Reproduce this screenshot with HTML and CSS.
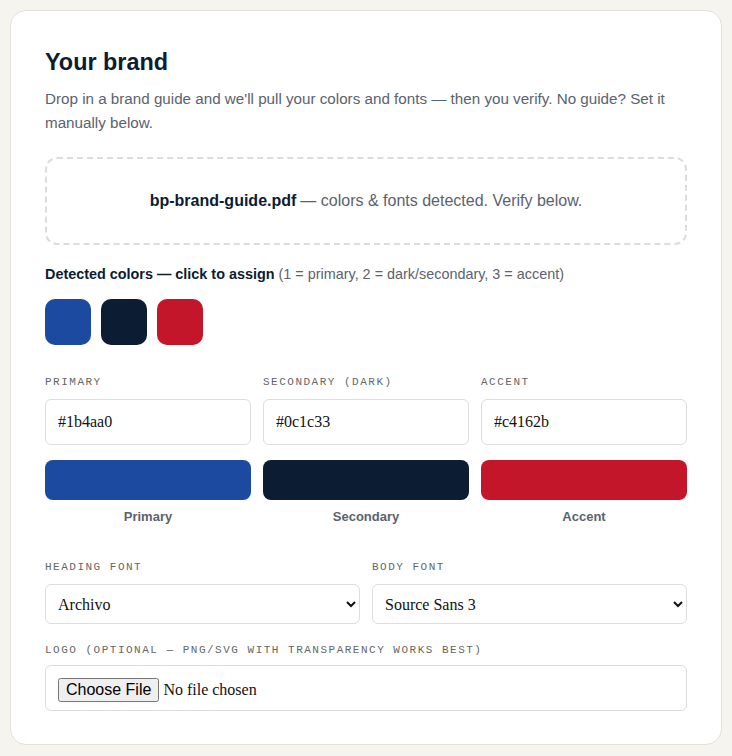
FILE: index.html
```html
<!DOCTYPE html>
<html lang="en">
<head>
<meta charset="utf-8">
<title>Your brand</title>
<link rel="stylesheet" href="styles.css">
</head>
<body>
<main class="card">
  <h2 class="title">Your brand</h2>
  <p class="intro">Drop in a brand guide and we'll pull your colors and fonts — then you verify. No guide? Set it manually below.</p>

  <div class="dropzone">
    <span class="file-name">bp-brand-guide.pdf</span> — colors &amp; fonts detected. Verify below.
  </div>

  <p class="detected"><strong>Detected colors — click to assign</strong> (1 = primary, 2 = dark/secondary, 3 = accent)</p>

  <div class="chips">
    <button class="chip chip-primary" type="button" aria-label="#1b4aa0"></button>
    <button class="chip chip-dark" type="button" aria-label="#0c1c33"></button>
    <button class="chip chip-accent" type="button" aria-label="#c4162b"></button>
  </div>

  <div class="color-grid">
    <div class="field">
      <label class="label">Primary</label>
      <input class="text-input" type="text" value="#1b4aa0">
      <div class="bar bar-primary"></div>
      <div class="bar-name">Primary</div>
    </div>
    <div class="field">
      <label class="label">Secondary (dark)</label>
      <input class="text-input" type="text" value="#0c1c33">
      <div class="bar bar-dark"></div>
      <div class="bar-name">Secondary</div>
    </div>
    <div class="field">
      <label class="label">Accent</label>
      <input class="text-input" type="text" value="#c4162b">
      <div class="bar bar-accent"></div>
      <div class="bar-name">Accent</div>
    </div>
  </div>

  <div class="font-grid">
    <div class="field">
      <label class="label">Heading font</label>
      <select class="select"><option>Archivo</option></select>
    </div>
    <div class="field">
      <label class="label">Body font</label>
      <select class="select"><option>Source Sans 3</option></select>
    </div>
  </div>

  <div class="field logo-field">
    <label class="label logo-label">Logo (optional — PNG/SVG with transparency works best)</label>
    <input class="file-input" type="file">
  </div>
</main>
</body>
</html>
```

FILE: styles.css
```css
* { box-sizing: border-box; }

html, body {
  margin: 0;
  background: #f5f4ef;
}

body {
  padding: 10px;
  font-family: "Liberation Sans", Arial, sans-serif;
  color: #0c1c33;
}

.card {
  background: #ffffff;
  border: 1px solid #e4e1d8;
  border-radius: 16px;
  padding: 34px 34px 33px;
}

.title {
  margin: 2px 0 10px;
  font-size: 23.4px;
  line-height: 30px;
  font-weight: 700;
  color: #0c1c33;
}

.intro {
  margin: 0 0 22px;
  font-size: 15.2px;
  line-height: 24px;
  color: #5b6270;
}

.dropzone {
  height: 88px;
  border: 2px dashed #dcdcdc;
  border-radius: 12px;
  display: flex;
  align-items: center;
  justify-content: center;
  font-size: 16px;
  color: #5b6270;
}

.file-name {
  font-weight: 700;
  color: #0c1c33;
  margin-right: 4px;
}

.detected {
  margin: 19px 0 14px;
  font-size: 14.4px;
  line-height: 21px;
  color: #5b6270;
}

.detected strong { color: #0c1c33; }

.chips {
  display: flex;
  gap: 10px;
  margin-bottom: 30px;
}

.chip {
  width: 46px;
  height: 46px;
  border: 0;
  border-radius: 10px;
  padding: 0;
  cursor: pointer;
}

.chip-primary, .bar-primary { background: #1b4aa0; }
.chip-dark, .bar-dark { background: #0c1c33; }
.chip-accent, .bar-accent { background: #c4162b; }

.color-grid {
  display: grid;
  grid-template-columns: repeat(3, minmax(0, 1fr));
  gap: 12px;
}

.field {
  display: flex;
  flex-direction: column;
  min-width: 0;
}

.label {
  font-family: "Liberation Mono", "DejaVu Sans Mono", monospace;
  font-size: 11px;
  line-height: 14px;
  letter-spacing: 1.5px;
  text-transform: uppercase;
  color: #666666;
  margin-bottom: 10px;
}

.text-input {
  width: 100%;
  height: 46px;
  border: 1px solid #dddddd;
  border-radius: 6px;
  padding: 0 12px;
  font-family: "Liberation Serif", "Times New Roman", serif;
  font-size: 16px;
  color: #111111;
  background: #fff;
}

.bar {
  height: 40px;
  border-radius: 8px;
  margin-top: 15px;
}

.bar-name {
  margin-top: 9px;
  text-align: center;
  font-size: 13px;
  line-height: 16px;
  font-weight: 700;
  color: #5b6270;
}

.font-grid {
  display: grid;
  grid-template-columns: repeat(2, minmax(0, 1fr));
  gap: 12px;
  margin-top: 35px;
}

.select {
  width: 100%;
  height: 40px;
  border: 1px solid #dddddd;
  border-radius: 6px;
  padding: 0 8px;
  font-family: "Liberation Serif", "Times New Roman", serif;
  font-size: 16px;
  color: #111111;
  background: #fff;
}

.logo-field {
  margin-top: 19px;
}

.logo-label {
  margin-bottom: 8px;
}

.file-input {
  width: 100%;
  height: 46px;
  border: 1px solid #dddddd;
  border-radius: 6px;
  padding: 12px;
  font-family: "Liberation Serif", "Times New Roman", serif;
  font-size: 16px;
  color: #111111;
  background: #fff;
}

.file-input::file-selector-button {
  font-family: "Liberation Sans", Arial, sans-serif;
  font-size: 16px;
}
```
